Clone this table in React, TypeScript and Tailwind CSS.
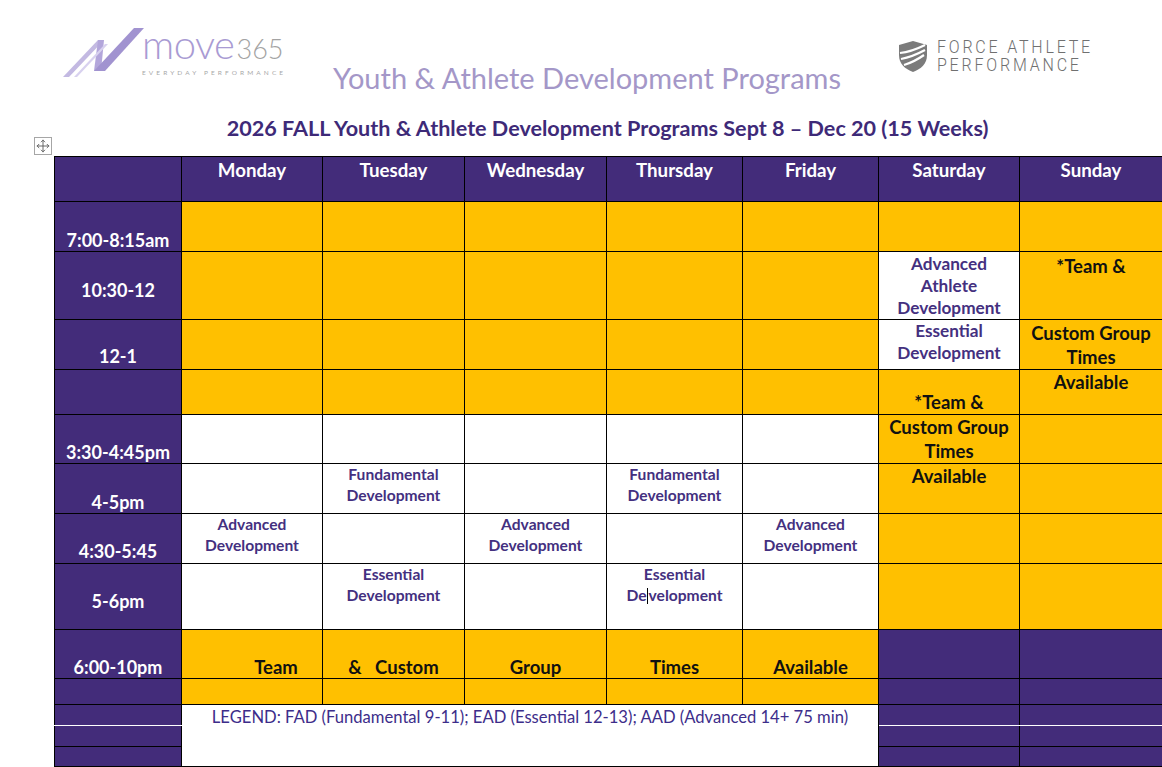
import { Move } from "lucide-react"

// Word-style schedule sheet: logos, titles and the weekly program grid

const font = "font-['Lato','Noto_Sans',sans-serif]"

function MoveLogo() {
  return (
    <div className="relative flex h-[60px] w-[230px] items-start">
      <svg width="86" height="55" viewBox="0 0 86 55" className="shrink-0">
        <polygon points="3,53 9,53 44,16 38,16" fill="#c3b9e2" />
        <polygon points="38,16 44,16 41,47 34,47" fill="#b3a6db" />
        <polygon points="34,47 45,47 84,4 74,4" fill="#a193d0" />
        <polygon points="14,53 17,53 48,20 45,20" fill="#d8d1ef" />
      </svg>
      <div className="-ml-[4px] flex flex-col">
        <div className="flex items-baseline leading-none">
          <span className="text-[40px] font-light tracking-[-0.5px] text-[#a99bd3]">move</span>
          <span className="ml-[2px] text-[27px] font-light text-[#a3a3a3]">365</span>
        </div>
        <span className="mt-[4px] text-[6.5px] tracking-[3.1px] text-[#a8a8a8]">EVERYDAY PERFORMANCE</span>
      </div>
    </div>
  )
}

function ForceLogo() {
  return (
    <div className="flex items-center gap-[9px]">
      <svg width="30" height="33" viewBox="0 0 30 33">
        <path d="M1 5 L15 1 L29 5 L29 15 C29 24 23 29 15 32 C7 29 1 24 1 15 Z" fill="#7b7b7b" />
        <path d="M2 13 Q13 12 27 5" stroke="#fff" strokeWidth="2.2" fill="none" />
        <path d="M3 19 Q14 17 27 10" stroke="#fff" strokeWidth="2.2" fill="none" />
        <path d="M6 25 Q16 22 26 15" stroke="#fff" strokeWidth="2.2" fill="none" />
      </svg>
      <div className="flex origin-left scale-y-110 flex-col font-['Roboto',sans-serif] text-[16px] font-light leading-[17px] tracking-[2.8px] text-[#707070]">
        <span>FORCE ATHLETE</span>
        <span>PERFORMANCE</span>
      </div>
    </div>
  )
}

const purple = "bg-[#432c7a]"
const yellow = "bg-[#ffc000]"
const cell = "border border-black p-0"

function TimeCell({ label, pb = "pb-0", last = false }: { label?: string; pb?: string; last?: boolean }) {
  return (
    <td
      className={`${cell} ${purple} ${pb} ${last ? "border-b-white" : ""} align-bottom text-center text-[18px] font-bold leading-[22px] text-white`}
    >
      {label}
    </td>
  )
}

function Dev({ lines, sat = false }: { lines: string[]; sat?: boolean }) {
  return (
    <div
      className={
        sat
          ? "text-center text-[17.2px] font-bold leading-[22px] text-[#44307f]"
          : "text-center text-[15.6px] font-bold leading-[21px] text-[#44307f]"
      }
    >
      {lines.map((l) => (
        <div key={l}>{l}</div>
      ))}
    </div>
  )
}

function Black({ lines }: { lines: string[] }) {
  return (
    <div className="text-center text-[18.5px] font-bold leading-[24px] text-[#111]">
      {lines.map((l) => (
        <div key={l}>{l}</div>
      ))}
    </div>
  )
}

const days = ["Monday", "Tuesday", "Wednesday", "Thursday", "Friday", "Saturday", "Sunday"]

export default function App() {
  return (
    <div className={`${font} relative h-[767px] w-[1162px] overflow-hidden bg-white`}>
      <div className="flex h-[112px] items-start">
        <div className="ml-[60px] mt-[24px]">
          <MoveLogo />
        </div>
        <div className="ml-[43px] mt-[60px] text-[29px] leading-[36px] text-[#a497c8]">
          Youth &amp; Athlete Development Programs
        </div>
        <div className="ml-auto mr-[69px] mt-[39px]">
          <ForceLogo />
        </div>
      </div>

      <div className="ml-[54px] w-[1107px] text-center text-[21.6px] font-bold leading-[32px] text-[#3e2a78]">
        2026 FALL Youth &amp; Athlete Development Programs Sept 8 – Dec 20 (15 Weeks)
      </div>

      <div className="relative ml-[54px] mt-[12px] w-[1108px]">
        <div className="absolute -left-[20px] -top-[19px] flex h-[18px] w-[18px] items-center justify-center border border-[#a6a6a6] bg-white text-[#555]">
          <Move size={14} strokeWidth={1.5} />
        </div>
        <table className="w-[1108px] table-fixed border-collapse">
          <colgroup>
            <col className="w-[127px]" />
            <col className="w-[141px]" />
            <col className="w-[142px]" />
            <col className="w-[142px]" />
            <col className="w-[136px]" />
            <col className="w-[136px]" />
            <col className="w-[141px]" />
            <col className="w-[143px]" />
          </colgroup>
          <tbody>
            <tr className="h-[45px]">
              <td className={`${cell} ${purple}`} />
              {days.map((d) => (
                <td
                  key={d}
                  className={`${cell} ${purple} pt-[2px] align-top text-center text-[18.7px] font-bold leading-[22px] text-white`}
                >
                  {d}
                </td>
              ))}
            </tr>

            <tr className="h-[50px]">
              <TimeCell label="7:00-8:15am" />
              <td className={`${cell} ${yellow}`} />
              <td className={`${cell} ${yellow}`} />
              <td className={`${cell} ${yellow}`} />
              <td className={`${cell} ${yellow}`} />
              <td className={`${cell} ${yellow}`} />
              <td className={`${cell} ${yellow}`} />
              <td className={`${cell} ${yellow}`} />
            </tr>

            <tr className="h-[68px]">
              <TimeCell label="10:30-12" pb="pb-[18px]" />
              <td className={`${cell} ${yellow}`} />
              <td className={`${cell} ${yellow}`} />
              <td className={`${cell} ${yellow}`} />
              <td className={`${cell} ${yellow}`} />
              <td className={`${cell} ${yellow}`} />
              <td className={`${cell} bg-white pt-[1px] align-top`}>
                <Dev sat lines={["Advanced", "Athlete", "Development"]} />
              </td>
              <td className={`${cell} ${yellow} pt-[2px] align-top`}>
                <Black lines={["*Team &"]} />
              </td>
            </tr>

            <tr className="h-[50px]">
              <TimeCell label="12-1" pb="pb-[2px]" />
              <td className={`${cell} ${yellow}`} />
              <td className={`${cell} ${yellow}`} />
              <td className={`${cell} ${yellow}`} />
              <td className={`${cell} ${yellow}`} />
              <td className={`${cell} ${yellow}`} />
              <td className={`${cell} bg-white pt-0 align-top`}>
                <Dev sat lines={["Essential", "Development"]} />
              </td>
              <td className={`${cell} ${yellow} pt-[1px] align-top`}>
                <Black lines={["Custom Group", "Times"]} />
              </td>
            </tr>

            <tr className="h-[45px]">
              <TimeCell />
              <td className={`${cell} ${yellow}`} />
              <td className={`${cell} ${yellow}`} />
              <td className={`${cell} ${yellow}`} />
              <td className={`${cell} ${yellow}`} />
              <td className={`${cell} ${yellow}`} />
              <td className={`${cell} ${yellow} pb-0 align-bottom`}>
                <Black lines={["*Team &"]} />
              </td>
              <td className={`${cell} ${yellow} pt-0 align-top`}>
                <Black lines={["Available"]} />
              </td>
            </tr>

            <tr className="h-[49px]">
              <TimeCell label="3:30-4:45pm" />
              <td className={`${cell} bg-white`} />
              <td className={`${cell} bg-white`} />
              <td className={`${cell} bg-white`} />
              <td className={`${cell} bg-white`} />
              <td className={`${cell} bg-white`} />
              <td className={`${cell} ${yellow} pt-0 align-top`}>
                <Black lines={["Custom Group", "Times"]} />
              </td>
              <td className={`${cell} ${yellow}`} />
            </tr>

            <tr className="h-[50px]">
              <TimeCell label="4-5pm" />
              <td className={`${cell} bg-white`} />
              <td className={`${cell} bg-white align-top`}>
                <Dev lines={["Fundamental", "Development"]} />
              </td>
              <td className={`${cell} bg-white`} />
              <td className={`${cell} bg-white align-top`}>
                <Dev lines={["Fundamental", "Development"]} />
              </td>
              <td className={`${cell} bg-white`} />
              <td className={`${cell} ${yellow} pt-0 align-top`}>
                <Black lines={["Available"]} />
              </td>
              <td className={`${cell} ${yellow}`} />
            </tr>

            <tr className="h-[50px]">
              <TimeCell label="4:30-5:45" pb="pb-[1px]" />
              <td className={`${cell} bg-white align-top`}>
                <Dev lines={["Advanced", "Development"]} />
              </td>
              <td className={`${cell} bg-white`} />
              <td className={`${cell} bg-white align-top`}>
                <Dev lines={["Advanced", "Development"]} />
              </td>
              <td className={`${cell} bg-white`} />
              <td className={`${cell} bg-white align-top`}>
                <Dev lines={["Advanced", "Development"]} />
              </td>
              <td className={`${cell} ${yellow}`} />
              <td className={`${cell} ${yellow}`} />
            </tr>

            <tr className="h-[66px]">
              <TimeCell label="5-6pm" pb="pb-[17px]" />
              <td className={`${cell} bg-white`} />
              <td className={`${cell} bg-white align-top`}>
                <Dev lines={["Essential", "Development"]} />
              </td>
              <td className={`${cell} bg-white`} />
              <td className={`${cell} bg-white align-top`}>
                <div className="text-center text-[15.6px] font-bold leading-[21px] text-[#44307f]">
                  <div>Essential</div>
                  <div>
                    De
                    <span className="mx-[0.5px] inline-block h-[16px] w-px bg-black align-[-3px]" />
                    velopment
                  </div>
                </div>
              </td>
              <td className={`${cell} bg-white`} />
              <td className={`${cell} ${yellow}`} />
              <td className={`${cell} ${yellow}`} />
            </tr>

            <tr className="h-[49px] text-[18.5px] font-bold leading-[22px] text-[#111]">
              <TimeCell label="6:00-10pm" />
              <td className={`${cell} ${yellow} pl-[48px] align-bottom text-center`}>Team</td>
              <td className={`${cell} ${yellow} whitespace-pre align-bottom text-center`}>&amp;   Custom</td>
              <td className={`${cell} ${yellow} align-bottom text-center`}>Group</td>
              <td className={`${cell} ${yellow} align-bottom text-center`}>Times</td>
              <td className={`${cell} ${yellow} align-bottom text-center`}>Available</td>
              <td className={`${cell} ${purple}`} />
              <td className={`${cell} ${purple}`} />
            </tr>

            <tr className="h-[26px]">
              <TimeCell />
              <td className={`${cell} ${yellow}`} />
              <td className={`${cell} ${yellow}`} />
              <td className={`${cell} ${yellow}`} />
              <td className={`${cell} ${yellow}`} />
              <td className={`${cell} ${yellow}`} />
              <td className={`${cell} ${purple}`} />
              <td className={`${cell} ${purple}`} />
            </tr>

            <tr className="h-[21px]">
              <TimeCell last />
              <td
                colSpan={5}
                rowSpan={3}
                className={`${cell} bg-white pt-[1px] align-top text-center text-[16.6px] leading-[22px] text-[#3d2d8a]`}
              >
                LEGEND: FAD (Fundamental 9-11); EAD (Essential 12-13); AAD (Advanced 14+ 75 min)
              </td>
              <td className={`${cell} ${purple} border-b-white`} />
              <td className={`${cell} ${purple} border-b-white`} />
            </tr>
            <tr className="h-[21px]">
              <TimeCell />
              <td className={`${cell} ${purple}`} />
              <td className={`${cell} ${purple}`} />
            </tr>
            <tr className="h-[20px]">
              <TimeCell />
              <td className={`${cell} ${purple}`} />
              <td className={`${cell} ${purple}`} />
            </tr>
          </tbody>
        </table>
      </div>
    </div>
  )
}
